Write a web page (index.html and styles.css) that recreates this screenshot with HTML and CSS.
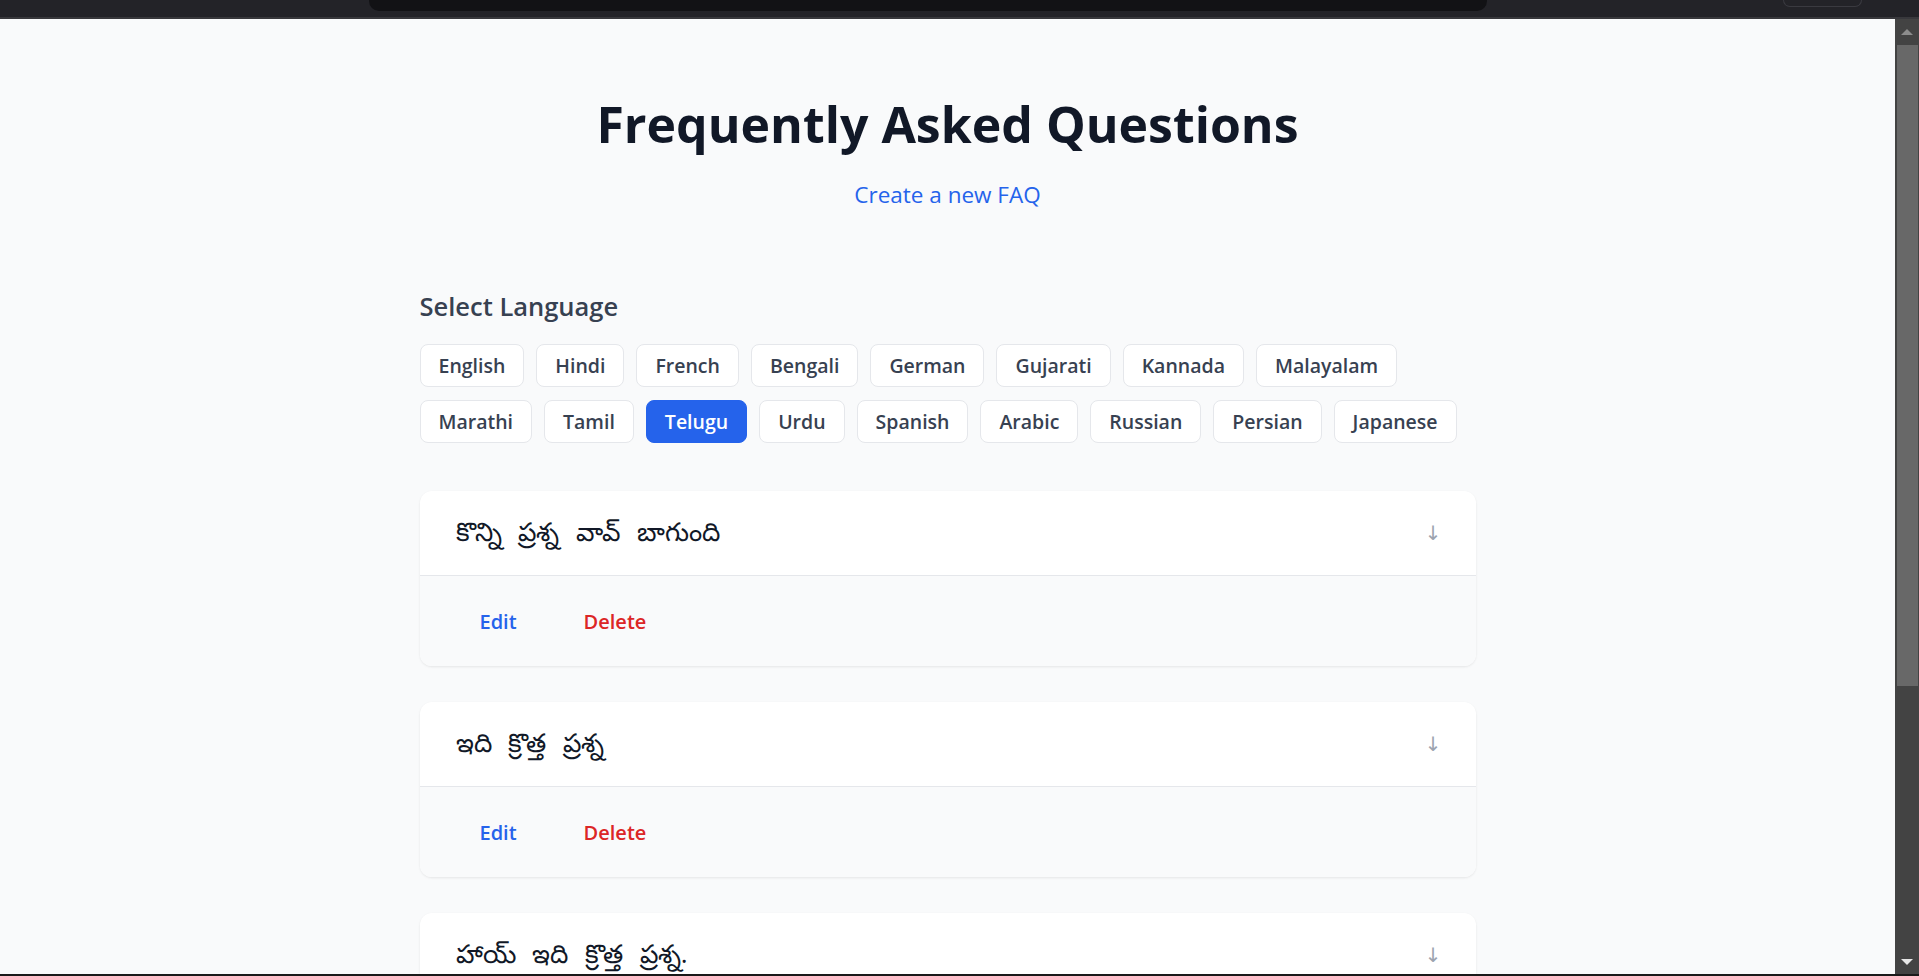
FILE: index.html
```html
<!DOCTYPE html>
<html lang="en">
<head>
<meta charset="utf-8">
<title>Frequently Asked Questions</title>
<link rel="stylesheet" href="styles.css">
</head>
<body>
<div class="window">
  <div class="chrome">
    <div class="chrome-tab"></div>
    <div class="chrome-btn"></div>
  </div>
  <div class="viewport">
    <main class="page">
      <header class="hero">
        <h1 class="title">Frequently Asked Questions</h1>
        <a class="create-link" href="#">Create a new FAQ</a>
      </header>
      <section class="container">
        <h2 class="section-title">Select Language</h2>
        <div class="lang-list">
          <div class="lang-row">
            <button class="lang-btn">English</button>
            <button class="lang-btn">Hindi</button>
            <button class="lang-btn">French</button>
            <button class="lang-btn">Bengali</button>
            <button class="lang-btn">German</button>
            <button class="lang-btn">Gujarati</button>
            <button class="lang-btn">Kannada</button>
            <button class="lang-btn">Malayalam</button>
          </div>
          <div class="lang-row">
            <button class="lang-btn">Marathi</button>
            <button class="lang-btn">Tamil</button>
            <button class="lang-btn active">Telugu</button>
            <button class="lang-btn">Urdu</button>
            <button class="lang-btn">Spanish</button>
            <button class="lang-btn">Arabic</button>
            <button class="lang-btn">Russian</button>
            <button class="lang-btn">Persian</button>
            <button class="lang-btn">Japanese</button>
          </div>
        </div>
        <div class="faq-list">
          <article class="faq-card">
            <div class="faq-head">
              <span class="faq-q">కొన్ని ప్రశ్న వావ్ బాగుంది</span>
              <span class="faq-arrow">↓</span>
            </div>
            <div class="faq-actions">
              <button class="act edit">Edit</button>
              <button class="act delete">Delete</button>
            </div>
          </article>
          <article class="faq-card">
            <div class="faq-head">
              <span class="faq-q">ఇది క్రొత్త ప్రశ్న</span>
              <span class="faq-arrow">↓</span>
            </div>
            <div class="faq-actions">
              <button class="act edit">Edit</button>
              <button class="act delete">Delete</button>
            </div>
          </article>
          <article class="faq-card">
            <div class="faq-head">
              <span class="faq-q">హాయ్ ఇది క్రొత్త ప్రశ్న.</span>
              <span class="faq-arrow">↓</span>
            </div>
            <div class="faq-actions">
              <button class="act edit">Edit</button>
              <button class="act delete">Delete</button>
            </div>
          </article>
        </div>
      </section>
    </main>
    <div class="scrollbar">
      <div class="sb-up"></div>
      <div class="sb-thumb"></div>
      <div class="sb-track"></div>
      <div class="sb-down"></div>
    </div>
  </div>
  <div class="bottom-line"></div>
</div>
</body>
</html>
```

FILE: styles.css
```css
* { box-sizing: border-box; }

html, body {
  margin: 0;
  padding: 0;
  height: 100%;
  overflow: hidden;
}

body {
  background: #232328;
  font-family: "Open Sans", "Noto Sans", "Liberation Sans", sans-serif;
}

.window {
  height: 100vh;
  display: flex;
  flex-direction: column;
}

/* top browser strip */
.chrome {
  height: 19px;
  flex: 0 0 19px;
  background: #232328;
  border-bottom: 2px solid #38383c;
  display: flex;
  align-items: flex-start;
  padding: 0 57px 0 369px;
}

.chrome-tab {
  width: 1118px;
  height: 11px;
  background: #121215;
  border-radius: 0 0 10px 10px;
}

.chrome-btn {
  margin-left: auto;
  width: 79px;
  height: 7px;
  border: 1px solid #3a3a40;
  border-top: none;
  border-radius: 0 0 8px 8px;
}

.viewport {
  flex: 1;
  display: flex;
  min-height: 0;
}

.page {
  flex: 1;
  overflow: hidden;
  background: #f9fafb;
}

/* header */
.hero {
  padding-top: 80px;
  text-align: center;
}

.title {
  margin: 0;
  font-size: 50px;
  line-height: 50px;
  font-weight: 700;
  color: #111827;
}

.create-link {
  display: inline-block;
  margin-top: 31px;
  font-size: 22.5px;
  line-height: 30px;
  color: #2563eb;
  text-decoration: none;
}

.container {
  width: 1056px;
  margin: 79px auto 0;
}

.section-title {
  margin: 0 0 21px;
  font-size: 25.5px;
  line-height: 34px;
  font-weight: 600;
  color: #374151;
}

.lang-list {
  display: flex;
  flex-direction: column;
  gap: 13px;
}

.lang-row {
  display: flex;
  gap: 12px;
}

.lang-btn {
  font-family: inherit;
  font-size: 19.5px;
  font-weight: 600;
  line-height: 29px;
  padding: 6px 18px;
  color: #374151;
  background: #ffffff;
  border: 1px solid #e5e7eb;
  border-radius: 8px;
}

.lang-btn.active {
  background: #2563eb;
  border-color: #2563eb;
  color: #ffffff;
}

/* FAQ cards */
.faq-list {
  margin-top: 48px;
}

.faq-card {
  background: #ffffff;
  border-radius: 12px;
  box-shadow: 0 1px 3px rgba(0, 0, 0, 0.06), 0 1px 2px rgba(0, 0, 0, 0.03);
  overflow: hidden;
  margin-bottom: 36px;
}

.faq-head {
  height: 84px;
  display: flex;
  align-items: center;
  justify-content: space-between;
  padding: 0 34px 0 36px;
}

.faq-q {
  font-size: 26px;
  word-spacing: 10px;
  color: #111827;
}

.faq-arrow {
  font-family: "DejaVu Sans", sans-serif;
  font-size: 20px;
  color: #9ca3af;
}

.faq-actions {
  border-top: 1px solid #e5e7eb;
  background: #f9fafb;
  display: flex;
  gap: 11px;
  padding: 24px 32px 22px;
}

.act {
  font-family: inherit;
  font-size: 20px;
  font-weight: 600;
  line-height: 28px;
  padding: 8px 28px;
  background: transparent;
  border: none;
}

.act.edit { color: #2563eb; }
.act.delete { color: #dc2626; }

/* scrollbar */
.scrollbar {
  width: 24px;
  flex: 0 0 24px;
  background: #434343;
  display: flex;
  flex-direction: column;
  align-items: center;
}

.sb-up {
  margin-top: 10px;
  width: 0;
  height: 0;
  border-left: 6px solid transparent;
  border-right: 6px solid transparent;
  border-bottom: 6px solid #8c8c8c;
}

.sb-thumb {
  margin-top: 10px;
  align-self: flex-end;
  margin-right: 1px;
  width: 21px;
  height: 641px;
  background: #686868;
}

.sb-track { flex: 1; }

.sb-down {
  margin-bottom: 9px;
  width: 0;
  height: 0;
  border-left: 6px solid transparent;
  border-right: 6px solid transparent;
  border-top: 6px solid #e6e6e6;
}

.bottom-line {
  height: 2px;
  flex: 0 0 2px;
  background: #1a1a1a;
}
```
